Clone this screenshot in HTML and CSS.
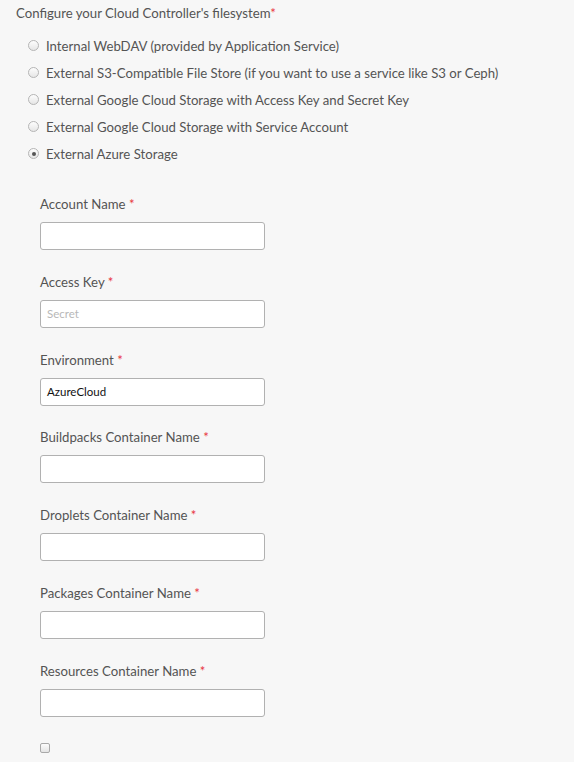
FILE: index.html
```html
<!DOCTYPE html>
<html>
<head>
<meta charset="utf-8">
<link rel="stylesheet" href="styles.css">
</head>
<body>
<div class="page">
  <div class="title">Configure your Cloud Controller's filesystem<span class="req">*</span></div>
  <div class="options">
    <label class="opt"><span class="radio"></span>Internal WebDAV (provided by Application Service)</label>
    <label class="opt"><span class="radio"></span>External S3-Compatible File Store (if you want to use a service like S3 or Ceph)</label>
    <label class="opt"><span class="radio"></span>External Google Cloud Storage with Access Key and Secret Key</label>
    <label class="opt"><span class="radio"></span>External Google Cloud Storage with Service Account</label>
    <label class="opt"><span class="radio checked"></span>External Azure Storage</label>
  </div>
  <div class="fields">
    <div class="field">
      <div class="flabel">Account Name <span class="req">*</span></div>
      <div class="input"></div>
    </div>
    <div class="field">
      <div class="flabel">Access Key <span class="req">*</span></div>
      <div class="input placeholder">Secret</div>
    </div>
    <div class="field">
      <div class="flabel">Environment <span class="req">*</span></div>
      <div class="input value">AzureCloud</div>
    </div>
    <div class="field">
      <div class="flabel">Buildpacks Container Name <span class="req">*</span></div>
      <div class="input"></div>
    </div>
    <div class="field">
      <div class="flabel">Droplets Container Name <span class="req">*</span></div>
      <div class="input"></div>
    </div>
    <div class="field">
      <div class="flabel">Packages Container Name <span class="req">*</span></div>
      <div class="input"></div>
    </div>
    <div class="field">
      <div class="flabel">Resources Container Name <span class="req">*</span></div>
      <div class="input"></div>
    </div>
    <div class="check"></div>
  </div>
</div>
</body>
</html>
```
FILE: styles.css
```css
html, body {
  margin: 0;
  padding: 0;
  background: #f7f7f7;
}
.page {
  font-family: Lato, "Open Sans", sans-serif;
  font-size: 13.2px;
  color: #545454;
  padding: 3px 0 0 16px;
}
.title {
  line-height: 20px;
  height: 20px;
}
.req {
  color: #e8363d;
}
.options {
  display: flex;
  flex-direction: column;
  padding: 9px 0 0 12px;
}
.opt {
  display: flex;
  align-items: center;
  height: 27px;
  line-height: 20px;
}
.radio {
  width: 9px;
  height: 9px;
  border: 1px solid #b5b5b5;
  border-radius: 50%;
  background: linear-gradient(#fdfdfd, #e6e6e6);
  margin-right: 7px;
  position: relative;
  flex: none;
}
.radio.checked::after {
  content: "";
  position: absolute;
  left: 2.5px;
  top: 2.5px;
  width: 4px;
  height: 4px;
  border-radius: 50%;
  background: #555;
}
.fields {
  display: flex;
  flex-direction: column;
  padding: 27px 0 0 24px;
}
.field {
  display: flex;
  flex-direction: column;
  margin-bottom: 21.8px;
}
.flabel {
  line-height: 20px;
  height: 20px;
  margin-bottom: 8px;
}
.input {
  height: 26px;
  border: 1px solid #b1b1b1;
  border-radius: 3px;
  background: #fff;
  font-size: 11.5px;
  line-height: 26px;
  padding-left: 6px;
  box-sizing: content-box;
  width: 217px;
}
.placeholder {
  color: #b8b8b8;
}
.value {
  color: #111;
}
.check {
  margin-top: 4px;
  width: 8px;
  height: 8px;
  border: 1px solid #a9a9a9;
  border-radius: 2px;
  background: linear-gradient(#fcfcfc, #e4e4e4);
}
```
